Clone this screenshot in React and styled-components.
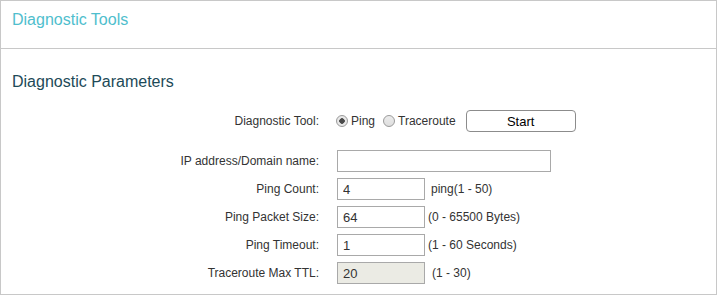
import React from "react";
import styled, { createGlobalStyle } from "styled-components";

const Global = createGlobalStyle`
  html, body { margin: 0; padding: 0; background: #fff; }
  body { font-family: Arial, "Liberation Sans", sans-serif; }
  * { box-sizing: border-box; }
`;

const Panel = styled.div`
  width: 717px;
  height: 295px;
  border: 1px solid #c8c8c8;
  background: #fff;
`;

const Header = styled.div`
  height: 48px;
  border-bottom: 1px solid #c8c8c8;
  padding: 10px 11px 0;
  font-size: 16px;
  color: #4fbecd;
`;

const Section = styled.div`
  padding-top: 24px;
`;

const SectionTitle = styled.div`
  padding-left: 11px;
  font-size: 16px;
  color: #1d4a58;
  line-height: 18px;
`;

const Row = styled.div`
  display: flex;
  align-items: center;
  height: 22px;
  margin-top: ${(p) => p.$gap ?? 6}px;
`;

const Label = styled.div`
  width: 318px;
  margin-right: 18px;
  text-align: right;
  font-size: 12px;
  color: #333;
`;

const RadioGroup = styled.label`
  display: inline-flex;
  align-items: center;
  font-size: 12px;
  color: #333;
`;

const Radio = styled.input.attrs({ type: "radio" })`
  appearance: none;
  -webkit-appearance: none;
  width: 12px;
  height: 12px;
  margin: 0 3px 0 ${(p) => p.$ml ?? 0}px;
  border: 1px solid #9a9a9a;
  border-radius: 50%;
  background: linear-gradient(#ececec, #dedede);
  &:checked {
    background: radial-gradient(circle, #4a4a4a 0, #4a4a4a 2.5px, #e8e8e8 3px);
  }
`;

const Button = styled.button`
  width: 110px;
  height: 22px;
  margin-left: 10px;
  border: 1px solid #8c8c8c;
  border-radius: 4px;
  background: #fff;
  font-family: Arial, "Liberation Sans", sans-serif;
  font-size: 13px;
  color: #000;
  padding: 0;
`;

const Input = styled.input`
  width: ${(p) => p.$w}px;
  height: 22px;
  border: 1px solid #a9a9a9;
  padding: 0 5px;
  font-family: Arial, "Liberation Sans", sans-serif;
  font-size: 13px;
  color: #333;
  background: #fff;
  outline: none;
  &:disabled {
    background: #ebebe4;
    color: #333;
  }
`;

const Hint = styled.span`
  margin-left: ${(p) => p.$ml}px;
  font-size: 12px;
  color: #333;
`;

export default function App() {
  return (
    <>
      <Global />
      <Panel>
        <Header>Diagnostic Tools</Header>
        <Section>
          <SectionTitle>Diagnostic Parameters</SectionTitle>
          <Row $gap={19}>
            <Label>Diagnostic Tool:</Label>
            <RadioGroup>
              <Radio name="tool" defaultChecked $ml={-1} />
              Ping
            </RadioGroup>
            <RadioGroup>
              <Radio name="tool" $ml={8} />
              Traceroute
            </RadioGroup>
            <Button>Start</Button>
          </Row>
          <Row $gap={18}>
            <Label>IP address/Domain name:</Label>
            <Input $w={214} defaultValue="" />
          </Row>
          <Row>
            <Label>Ping Count:</Label>
            <Input $w={88} defaultValue="4" />
            <Hint $ml={6}>ping(1 - 50)</Hint>
          </Row>
          <Row>
            <Label>Ping Packet Size:</Label>
            <Input $w={88} defaultValue="64" />
            <Hint $ml={3}>(0 - 65500 Bytes)</Hint>
          </Row>
          <Row>
            <Label>Ping Timeout:</Label>
            <Input $w={88} defaultValue="1" />
            <Hint $ml={3}>(1 - 60 Seconds)</Hint>
          </Row>
          <Row>
            <Label>Traceroute Max TTL:</Label>
            <Input $w={88} defaultValue="20" disabled />
            <Hint $ml={7}>(1 - 30)</Hint>
          </Row>
        </Section>
      </Panel>
    </>
  );
}
